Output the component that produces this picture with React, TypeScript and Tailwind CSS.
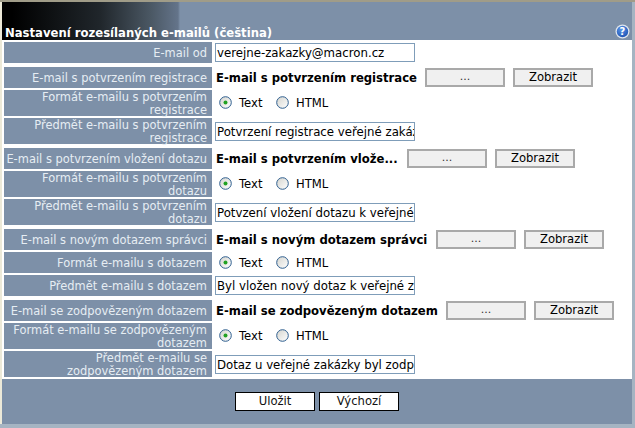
function Row({ label, h, mt = "mt-[2px]", children }: { label: React.ReactNode; h: string; mt?: string; children: React.ReactNode }) {
  return (
    <div className={`flex ${h} ${mt}`}>
      <div className="w-[208px] shrink-0 bg-[#7d90a8] text-[#e6edf3] text-right text-[11.45px] leading-[13px] pr-[5px] flex items-center justify-end">
        <span className="pt-[2px]">{label}</span>
      </div>
      <div className="flex-1 min-w-0 flex items-center pl-[3px]">{children}</div>
    </div>
  );
}

function TextBox({ value }: { value: string }) {
  return (
    <input
      readOnly
      value={value}
      className="w-[200px] h-[19px] border border-[#7f9db9] bg-white text-[11.75px] pl-[1px] pt-[1px] text-black outline-none"
      style={{ fontFamily: '"DejaVu Sans", Verdana, sans-serif' }}
    />
  );
}

function FileRow({ name, w }: { name: string; w: string }) {
  return (
    <div className="flex items-center text-[11.65px]">
      <span className={`font-bold text-black whitespace-nowrap pl-[1px] pt-[2px] ${w}`}>{name}</span>
      <div className="w-[80px] h-[19px] border-2 border-[#a9a9a9] bg-[#f0f0f0] flex items-center justify-center text-[11px] text-[#333]">...</div>
      <div className="w-[80px] h-[19px] ml-[8px] border-2 border-[#a9a9a9] bg-[#f0f0f0] flex items-center justify-center text-[11.6px] text-black">Zobrazit</div>
    </div>
  );
}

function Radio({ checked }: { checked?: boolean }) {
  return (
    <svg width="13" height="13" viewBox="0 0 13 13" className="shrink-0">
      <defs>
        <linearGradient id={checked ? "ra" : "rb"} x1="0" y1="0" x2="1" y2="1">
          <stop offset="0" stopColor="#d4d4ce" />
          <stop offset="1" stopColor="#ffffff" />
        </linearGradient>
      </defs>
      <circle cx="6.5" cy="6.5" r="5.8" fill={`url(#${checked ? "ra" : "rb"})`} stroke="#2f5f8f" strokeWidth="1" />
      {checked && <circle cx="6.5" cy="6.5" r="2" fill="#21a121" />}
    </svg>
  );
}

function Format() {
  return (
    <div className="flex items-center text-[11.6px] text-black pl-[4px]">
      <Radio checked />
      <span className="ml-[7px] w-[37px] pt-[2px]">Text</span>
      <Radio />
      <span className="ml-[7px] pt-[2px]">HTML</span>
    </div>
  );
}

function Btn({ children }: { children: React.ReactNode }) {
  return (
    <div className="w-[80px] h-[19px] border border-black bg-white flex items-center justify-center text-[11.6px] text-[#111]">
      {children}
    </div>
  );
}

export default function App() {
  return (
    <div className="w-[635px] h-[428px] bg-[#a5b4c2] overflow-hidden" style={{ fontFamily: '"DejaVu Sans", Verdana, sans-serif' }}>
      <div className="h-[2px] bg-[#a09c88]" />
      <div className="flex h-[422px]">
        <div className="w-[2px] bg-[#ece9d8]" />
        <div className="w-[630px] bg-white flex flex-col">
          <div className="h-[38px] flex items-end justify-between bg-[linear-gradient(to_right,#000_10px,#20262b_98px,#4a5763_148px,#64748a_176px,#7d90a8_178px)] pl-[3px] pr-[2px]">
            <span className="text-[11.65px] font-bold text-white leading-[15px] translate-y-[1px]">Nastavení rozesílaných e-mailů (čeština)</span>
            <svg width="15" height="15" viewBox="0 0 15 15" className="mb-[1px]">
              <defs>
                <radialGradient id="help" cx="0.4" cy="0.3" r="0.8">
                  <stop offset="0" stopColor="#5b96e8" />
                  <stop offset="1" stopColor="#1a4fb0" />
                </radialGradient>
              </defs>
              <circle cx="7.5" cy="7.5" r="7" fill="#dfe6ee" />
              <circle cx="7.5" cy="7.5" r="5.7" fill="url(#help)" />
              <text x="7.5" y="11" textAnchor="middle" fontSize="10" fontWeight="bold" fill="#fff">?</text>
            </svg>
          </div>
          <div className="flex-1 pl-[2px] flex flex-col">
            <Row label="E-mail od" h="h-[21px]"><TextBox value="verejne-zakazky@macron.cz" /></Row>
            <Row label="E-mail s potvrzením registrace" h="h-[21px]" mt="mt-[4px]"><FileRow name="E-mail s potvrzením registrace" w="w-[210px]" /></Row>
            <Row label="Formát e-mailu s potvrzením registrace" h="h-[26px]"><Format /></Row>
            <Row label="Předmět e-mailu s potvrzením registrace" h="h-[26px]"><TextBox value="Potvrzení registrace veřejné zakázky" /></Row>
            <Row label="E-mail s potvrzením vložení dotazu" h="h-[21px]" mt="mt-[4px]"><FileRow name="E-mail s potvrzením vlože..." w="w-[192px]" /></Row>
            <Row label="Formát e-mailu s potvrzením dotazu" h="h-[26px]"><Format /></Row>
            <Row label="Předmět e-mailu s potvrzením dotazu" h="h-[26px]"><TextBox value="Potvzení vložení dotazu k veřejné zakázce" /></Row>
            <Row label="E-mail s novým dotazem správci" h="h-[21px]" mt="mt-[4px]"><FileRow name="E-mail s novým dotazem správci" w="w-[221px]" /></Row>
            <Row label="Formát e-mailu s dotazem" h="h-[21px]"><Format /></Row>
            <Row label="Předmět e-mailu s dotazem" h="h-[21px]"><TextBox value="Byl vložen nový dotaz k veřejné zakázce" /></Row>
            <Row label="E-mail se zodpovězeným dotazem" h="h-[21px]" mt="mt-[4px]"><FileRow name="E-mail se zodpovězeným dotazem" w="w-[231px]" /></Row>
            <Row label="Formát e-mailu se zodpovězeným dotazem" h="h-[26px]"><Format /></Row>
            <Row label={<>Předmět e-mailu se<br />zodpovězeným dotazem</>} h="h-[26px]"><TextBox value="Dotaz u veřejné zakázky byl zodpovězen" /></Row>
            <div className="flex-1 mt-[2px] -ml-[2px] bg-[#7d90a8] flex items-center justify-center gap-[4px]">
              <Btn>Uložit</Btn>
              <Btn>Výchozí</Btn>
            </div>
          </div>
        </div>
      </div>
    </div>
  );
}
